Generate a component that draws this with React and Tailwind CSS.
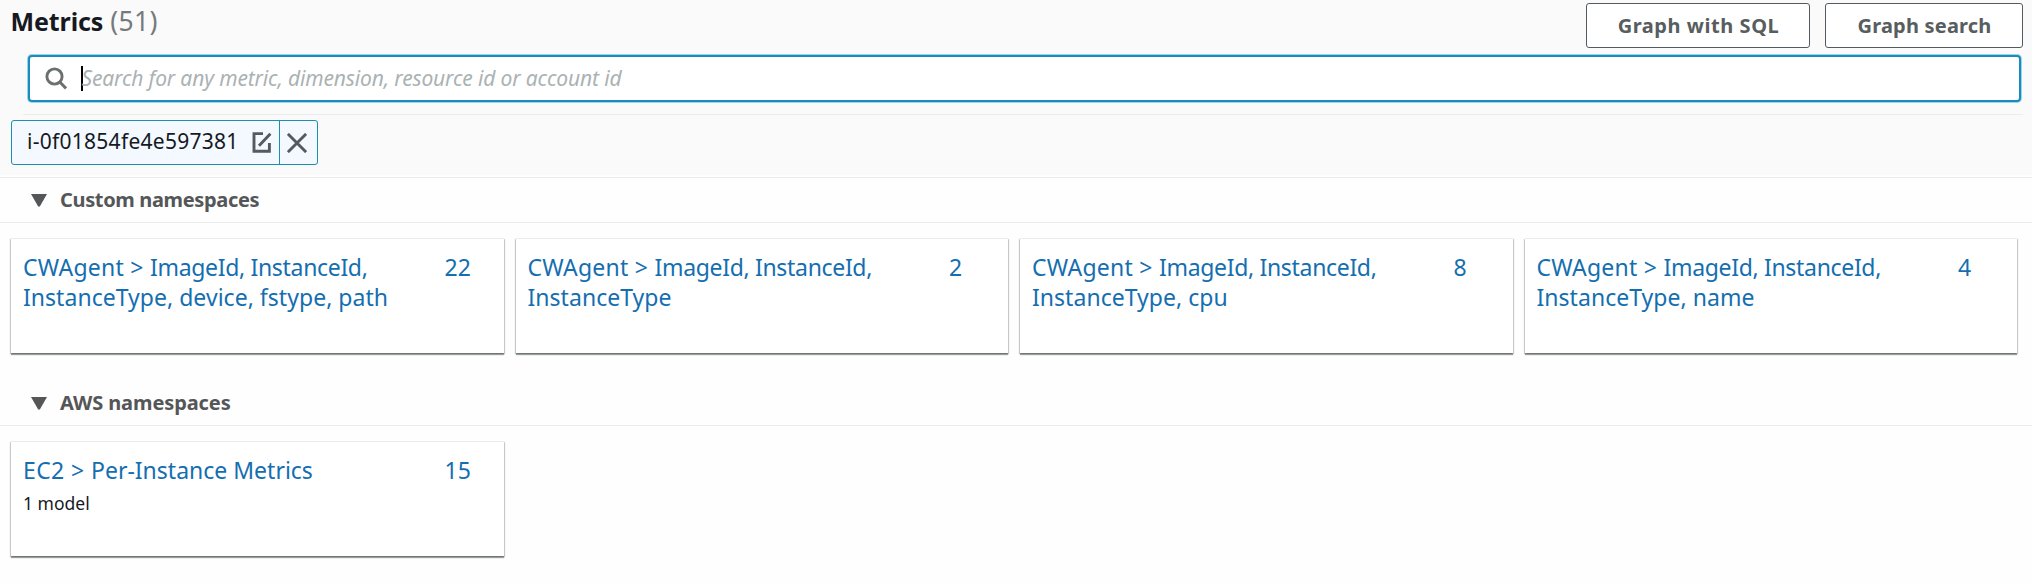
import React from 'react';

function SearchIcon() {
  return (
    <svg className="ml-[15px] h-[23px] w-[22px] shrink-0" viewBox="0 0 22 23" fill="none" stroke="#6a7070" strokeWidth="2.9">
      <circle cx="9.5" cy="9.5" r="7.6" />
      <path d="M14.8 15 L21 21.4" />
    </svg>
  );
}

function EditIcon() {
  return (
    <svg className="h-[21px] w-[20px] shrink-0" viewBox="0 0 20 21" fill="none" stroke="#545b60" strokeWidth="2.9">
      <path d="M11 1.6 H2 V19.2 H17.4 V11" />
      <path d="M7 13.8 L18.4 1.8" />
    </svg>
  );
}

function CloseIcon() {
  return (
    <svg className="h-5 w-5" viewBox="0 0 20 20" fill="none" stroke="#545b60" strokeWidth="2.9">
      <path d="M0.9 0.9 L19.1 19.1 M19.1 0.9 L0.9 19.1" />
    </svg>
  );
}

function Button({ className, children }) {
  return (
    <button className={`h-[45px] rounded-[3px] border border-[#545b60] bg-white pl-px text-center text-[20px] leading-none font-bold text-[#585d5e] ${className}`}>
      {children}
    </button>
  );
}

function SectionHeader({ children }) {
  return (
    <div className="flex h-[45px] items-center border-b border-[#eaeded] pl-[31px]">
      <svg className="h-[13px] w-4 shrink-0" viewBox="0 0 16 13" fill="#545658">
        <path d="M0 0 H16 L8.8 12.4 H7.2 Z" />
      </svg>
      <h2 className="ml-[13px] text-[20px] leading-7 font-bold text-[#545658]">{children}</h2>
    </div>
  );
}

function Card({ namespace, rest, second, count, note }) {
  return (
    <div className="flex h-[115px] justify-between border-t border-[#eaeded] bg-white pt-[13px] pr-[32px] pl-3 shadow-[0_2px_1px_0_rgba(0,10,15,0.36),1px_1px_1px_0_rgba(0,10,15,0.17),-1px_1px_1px_0_rgba(0,10,15,0.17)]">
      <div>
        <a className="block text-[23px] leading-[30px] whitespace-nowrap text-[#146eb0]">
          <span className={second ? 'tracking-[0.25px]' : 'tracking-[0.4px]'}>{namespace} &gt; </span>
          <span className={second ? 'tracking-[-0.32px]' : ''}>{rest}</span>
          {second && <span className="block tracking-[0.03px]">{second}</span>}
        </a>
        {note && <p className="mt-[6px] text-[17.5px] leading-6 text-[#16191f]">{note}</p>}
      </div>
      <span className="w-[27px] text-[23px] leading-[30px] text-[#146eb0]">{count}</span>
    </div>
  );
}

const customCards = [
  { second: 'InstanceType, device, fstype, path', count: 22 },
  { second: 'InstanceType', count: 2 },
  { second: 'InstanceType, cpu', count: 8 },
  { second: 'InstanceType, name', count: 4 },
];

export default function App() {
  return (
    <div className="h-[584px] w-[2032px] overflow-hidden bg-[#fefefe] font-['Noto_Sans',sans-serif]">
      <div className="h-[175px] bg-[#fafafa]">
        <header className="flex h-[54px] justify-between pr-[9px] pl-[10.5px]">
          <h1 className="flex text-[25px] leading-[42px] font-bold tracking-[-0.1px] text-[#16191f]">
            Metrics
            <span className="ml-[7px] text-[26.5px] font-normal tracking-[0.3px] text-[#757a7d]">(51)</span>
          </h1>
          <div className="flex gap-[15px] pt-[3px]">
            <Button className="w-[224px] tracking-[0.55px]">Graph with SQL</Button>
            <Button className="w-[198px] tracking-[0.2px]">Graph search</Button>
          </div>
        </header>
        <div className="pt-px pr-[11px] pl-7">
          <div className="flex h-[47px] items-center rounded-[4px] border-2 border-[#1b8bbd] bg-white pb-px shadow-[0_0_0_1px_rgba(60,175,220,0.5)]">
            <SearchIcon />
            <span className="ml-[14px] h-[25px] w-[1.5px] bg-black" />
            <span className="-ml-px text-[21px] leading-none tracking-[-0.14px] whitespace-nowrap text-[#aab2b3] italic">
              Search for any metric, dimension, resource id or account id
            </span>
          </div>
        </div>
        <div className="mt-3 mr-[9px] ml-[23px] h-px bg-[#e8edee]" />
        <div className="mt-[5px] ml-[11px] flex h-[45px] w-[307px] rounded-[3px] border border-[#1a8fae] bg-[#f3f9ff]">
          <div className="flex w-[268px] items-center border-r border-[#1a8fae] pl-[15px]">
            <span className="w-[225px] pb-[2px] text-[21px] leading-none tracking-[0.27px] text-[#16191f]">i-0f01854fe4e597381</span>
            <EditIcon />
          </div>
          <div className="flex flex-1 items-center justify-center pr-1">
            <CloseIcon />
          </div>
        </div>
      </div>
      <div className="h-[3px] border-b border-[#eaeded]" />

      <SectionHeader><span className="tracking-[-0.35px]">Custom namespaces</span></SectionHeader>
      <div className="grid grid-cols-4 gap-x-3 pt-[15px] pr-[15px] pl-[11px]">
        {customCards.map((card) => (
          <Card key={card.second} namespace="CWAgent" rest="ImageId, InstanceId," {...card} />
        ))}
      </div>

      <div className="mt-[28px]">
        <SectionHeader><span className="tracking-[-0.1px]">AWS namespaces</span></SectionHeader>
      </div>
      <div className="grid grid-cols-4 gap-x-3 pt-[15px] pr-[15px] pl-[11px]">
        <Card namespace="EC2" rest="Per-Instance Metrics" count={15} note="1 model" />
      </div>
    </div>
  );
}
